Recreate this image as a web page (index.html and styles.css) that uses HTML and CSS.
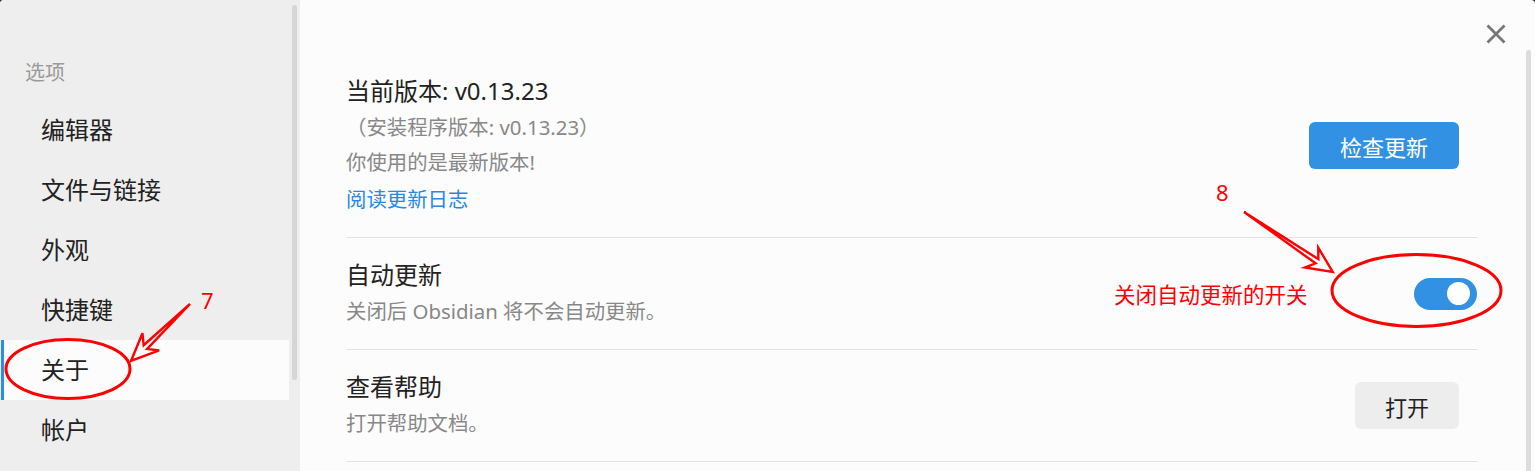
FILE: index.html
```html
<!DOCTYPE html>
<html lang="zh-CN">
<head>
<meta charset="utf-8">
<title>设置 - 关于</title>
<link rel="stylesheet" href="styles.css">
</head>
<body>
<div class="modal">
  <nav class="sidebar">
    <div class="sidebar-label">选项</div>
    <div class="nav-item">编辑器</div>
    <div class="nav-item">文件与链接</div>
    <div class="nav-item">外观</div>
    <div class="nav-item">快捷键</div>
    <div class="nav-item active">关于</div>
    <div class="nav-item">帐户</div>
    <div class="thumb sidebar-thumb"></div>
  </nav>
  <main class="content">
    <button class="close" aria-label="关闭">
      <svg width="20" height="20" viewBox="0 0 20 20"><path d="M1.5 1.5 L18.5 18.5 M18.5 1.5 L1.5 18.5" stroke="#777" stroke-width="2.8" fill="none"/></svg>
    </button>
    <section class="setting">
      <div class="info">
        <div class="name">当前版本: v0.13.23</div>
        <div class="lines">
          <div class="line">（安装程序版本: v0.13.23）</div>
          <div class="line">你使用的是最新版本!</div>
          <a class="link">阅读更新日志</a>
        </div>
      </div>
      <button class="btn primary">检查更新</button>
    </section>
    <section class="setting">
      <div class="info">
        <div class="name">自动更新</div>
        <div class="desc">关闭后 Obsidian 将不会自动更新。</div>
      </div>
      <div class="toggle"><span class="knob"></span></div>
    </section>
    <section class="setting">
      <div class="info">
        <div class="name">查看帮助</div>
        <div class="desc">打开帮助文档。</div>
      </div>
      <button class="btn">打开</button>
    </section>
    <div class="thumb main-thumb"></div>
  </main>

  <svg class="annot" width="1535" height="471" viewBox="0 0 1535 471">
    <ellipse cx="68" cy="369" rx="62" ry="29.5"/>
    <g transform="translate(190 304) rotate(136)">
      <polygon points="0,0 62,2.5 54.5,12 82,0 54.5,-12 62,-2.5"/>
    </g>
    <ellipse cx="1416.5" cy="290.5" rx="84.5" ry="36"/>
    <g transform="translate(1244 212) rotate(34)">
      <polygon points="0,0 88,2.5 81.5,12 107,0 81.5,-12 88,-2.5"/>
    </g>
  </svg>
  <span class="note num n7">7</span>
  <span class="note num n8">8</span>
  <span class="note label-note">关闭自动更新的开关</span>
</div>
</body>
</html>
```

FILE: styles.css
```css
html, body {
  margin: 0;
  padding: 0;
  background: #2b2b2b;
}
body {
  font-family: "Noto Sans", "Noto Sans CJK SC", sans-serif;
  overflow: hidden;
}
.modal {
  position: relative;
  display: flex;
  width: 1535px;
  height: 471px;
  overflow: hidden;
  border-radius: 4px 4px 0 0;
  background: #fcfcfc;
}
.sidebar {
  position: relative;
  flex: 0 0 300px;
  box-sizing: border-box;
  padding: 55px 11px 0 1px;
  background: #eeeeee;
}
.sidebar-label {
  padding-left: 24px;
  font-size: 20px;
  line-height: 36px;
  color: #9a9a9a;
  margin-bottom: 9px;
}
.nav-item {
  display: flex;
  align-items: center;
  box-sizing: border-box;
  height: 60px;
  padding-bottom: 3px;
  border-left: 3px solid transparent;
  padding-left: 37px;
  font-size: 24px;
  color: #222;
}
.nav-item.active {
  border-left-color: #2e8de3;
  background: #fcfcfc;
}
.thumb {
  position: absolute;
  width: 5px;
  border-radius: 3px;
}
.sidebar-thumb {
  left: 292px;
  top: 5px;
  height: 375px;
  background: #d6d6d6;
}
.main-thumb {
  right: 4px;
  top: 50px;
  height: 440px;
  background: #dddddd;
}
.content {
  position: relative;
  flex: 1;
  padding: 54px 58px 0 46px;
}
.close {
  position: absolute;
  top: 24px;
  right: 28px;
  width: 21px;
  height: 20px;
  padding: 0;
  border: 0;
  background: none;
  display: flex;
}
.setting {
  display: flex;
  align-items: center;
  justify-content: space-between;
  padding: 20px 0;
  border-bottom: 1px solid #e2e2e2;
}
.name {
  font-size: 24px;
  line-height: 34px;
  color: #222;
}
.lines {
  margin-top: 2px;
  font-size: 20.4px;
  line-height: 35px;
  color: #888;
}
.link {
  display: block;
  margin-top: 2px;
  color: #2a88e0;
}
.desc {
  margin-top: 1px;
  font-size: 20.4px;
  line-height: 36px;
  color: #888;
}
.btn {
  margin-right: 18px;
  height: 47px;
  padding: 0 30px;
  border: 0;
  border-radius: 6px;
  font-family: inherit;
  font-size: 22px;
  color: #222;
  background: #ededed;
}
.btn.primary {
  width: 150px;
  padding: 0;
  color: #fff;
  background: #3391e3;
}
.toggle {
  position: relative;
  width: 63px;
  height: 32px;
  border-radius: 16px;
  background: #3391e3;
  display: flex;
  align-items: center;
  justify-content: flex-end;
  padding-right: 7px;
  box-sizing: border-box;
}
.knob {
  width: 23px;
  height: 23px;
  border-radius: 50%;
  background: #fff;
}
.annot {
  position: absolute;
  left: 0;
  top: 0;
  pointer-events: none;
  fill: none;
  stroke: #ff0000;
}
.annot ellipse {
  stroke-width: 3;
}
.annot polygon {
  stroke-width: 2.4;
  stroke-linejoin: miter;
}
.note {
  position: absolute;
  color: #ff0000;
  line-height: 1;
  white-space: nowrap;
}
.num {
  font-family: "Noto Sans", sans-serif;
  font-size: 22px;
}
.n7 {
  left: 201px;
  top: 289px;
}
.n8 {
  left: 1216px;
  top: 181px;
}
.label-note {
  left: 1114px;
  top: 283px;
  font-family: "Noto Sans CJK SC", sans-serif;
  font-size: 21.5px;
}
```
